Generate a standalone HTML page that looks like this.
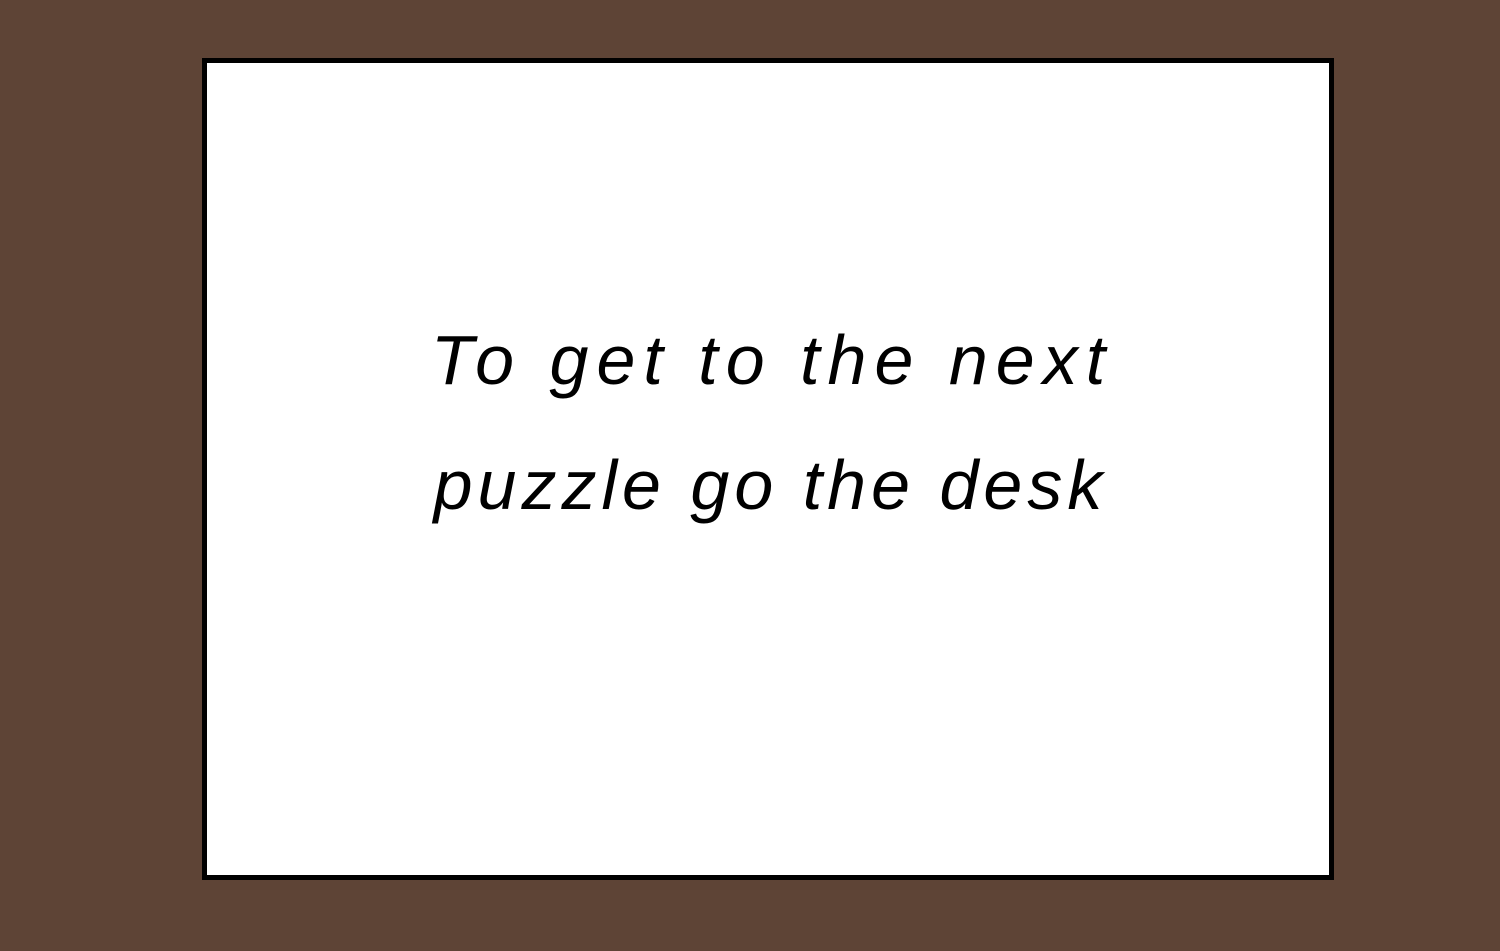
<!DOCTYPE html>
<html><head><meta charset="utf-8"><style>
html,body{margin:0;padding:0;width:1500px;height:951px;background:#5e4436;overflow:hidden}
.box{position:absolute;left:202px;top:58px;width:1122px;height:812px;background:#fff;border:5px solid #000}
.t{position:absolute;left:0;width:100%;text-align:center;font-family:"Liberation Sans",sans-serif;font-style:italic;font-size:70px;color:#000;white-space:nowrap}
</style></head><body>
<div class="box">
<div class="t" style="top:257px;letter-spacing:8px;text-indent:8px">To get to the next</div>
<div class="t" style="top:382px;letter-spacing:5px;text-indent:5px">puzzle go the desk</div>
</div>
</body></html>
